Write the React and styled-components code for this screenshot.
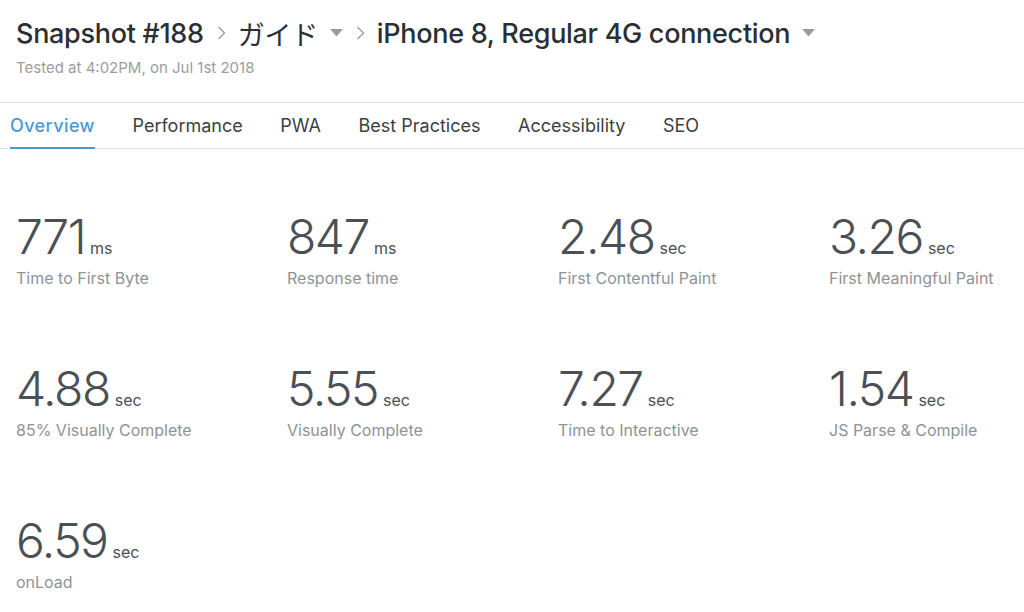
import React from "react";
import styled, { createGlobalStyle } from "styled-components";

const GlobalStyle = createGlobalStyle`
  html, body {
    margin: 0;
    padding: 0;
    background: #fff;
    font-family: Inter, "Noto Sans", "Noto Sans CJK JP", sans-serif;
    -webkit-font-smoothing: antialiased;
  }
`;

const metrics = [
  { value: "771", unit: "ms", label: "Time to First Byte" },
  { value: "847", unit: "ms", label: "Response time" },
  { value: "2.48", unit: "sec", label: "First Contentful Paint" },
  { value: "3.26", unit: "sec", label: "First Meaningful Paint" },
  { value: "4.88", unit: "sec", label: "85% Visually Complete" },
  { value: "5.55", unit: "sec", label: "Visually Complete" },
  { value: "7.27", unit: "sec", label: "Time to Interactive" },
  { value: "1.54", unit: "sec", label: "JS Parse & Compile" },
  { value: "6.59", unit: "sec", label: "onLoad" },
];

const tabs = ["Overview", "Performance", "PWA", "Best Practices", "Accessibility", "SEO"];

const Page = styled.div`
  width: 1024px;
  min-height: 612px;
  overflow: hidden;
`;

const Header = styled.header`
  padding: 13px 16px 0;
  height: 102px;
  box-sizing: border-box;
`;

const Crumbs = styled.h1`
  display: flex;
  align-items: center;
  margin: 0;
  height: 40px;
  font-size: 27px;
  font-weight: 500;
  color: #2b2f33;
  letter-spacing: -0.3px;
`;

const Crumb = styled.span`
  font-weight: ${(p) => (p.$light ? 400 : 500)};
  font-family: ${(p) =>
    p.$light ? '"Noto Sans CJK JP", Inter, sans-serif' : 'Inter, "Noto Sans CJK JP", sans-serif'};
`;

const Sep = styled.span`
  display: inline-flex;
  margin: 0 12px 0 13px;
  color: #9a9a9a;
`;

const Caret = styled.span`
  display: inline-flex;
  margin-left: 12px;
  color: #9b9b9b;
`;

const Sub = styled.div`
  margin-top: 5px;
  font-size: 15px;
  color: #9a9da0;
`;

const Tabs = styled.nav`
  display: flex;
  gap: 37.6px;
  height: 45px;
  padding: 0 10px;
  border-top: 1px solid #dedede;
  border-bottom: 1px solid #dedede;
`;

const Tab = styled.div`
  display: flex;
  align-items: center;
  font-size: 18px;
  color: ${(p) => (p.$active ? "#4a9ad6" : "#3b3f43")};
  font-weight: ${(p) => (p.$active ? 500 : 400)};
  letter-spacing: ${(p) => (p.$active ? "0.4px" : "0")};
  border-bottom: 2px solid ${(p) => (p.$active ? "#4a9ad6" : "transparent")};
  margin-bottom: -1px;
  padding-top: 1px;
`;

const Grid = styled.section`
  display: grid;
  grid-template-columns: repeat(3, 271px) 1fr;
  row-gap: 73px;
  padding: 60px 16px 0;
`;

const Metric = styled.div`
  display: flex;
  flex-direction: column;
`;

const ValueRow = styled.div`
  display: flex;
  align-items: baseline;
  gap: 5px;
  color: #4b5055;
`;

const Value = styled.span`
  font-size: 48px;
  font-weight: 300;
  line-height: 56px;
  letter-spacing: -1.5px;
`;

const Unit = styled.span`
  font-size: 16px;
  font-weight: 400;
`;

const Label = styled.div`
  margin-top: 3px;
  font-size: 16px;
  color: #8e9396;
`;

const Chevron = () => (
  <svg width="9" height="16" viewBox="0 0 9 16">
    <path d="M1.5 2 L7.5 8 L1.5 14" fill="none" stroke="currentColor" strokeWidth="1.3" />
  </svg>
);

const Down = () => (
  <svg width="13" height="8" viewBox="0 0 13 8">
    <path d="M0 0 H13 L6.5 7.5 Z" fill="currentColor" />
  </svg>
);

export default function App() {
  return (
    <Page>
      <GlobalStyle />
      <Header>
        <Crumbs>
          <Crumb>Snapshot #188</Crumb>
          <Sep><Chevron /></Sep>
          <Crumb $light>ガイド</Crumb>
          <Caret><Down /></Caret>
          <Sep><Chevron /></Sep>
          <Crumb>iPhone 8, Regular 4G connection</Crumb>
          <Caret><Down /></Caret>
        </Crumbs>
        <Sub>Tested at 4:02PM, on Jul 1st 2018</Sub>
      </Header>
      <Tabs>
        {tabs.map((t, i) => (
          <Tab key={t} $active={i === 0}>{t}</Tab>
        ))}
      </Tabs>
      <Grid>
        {metrics.map((m) => (
          <Metric key={m.label}>
            <ValueRow>
              <Value>{m.value}</Value>
              <Unit>{m.unit}</Unit>
            </ValueRow>
            <Label>{m.label}</Label>
          </Metric>
        ))}
      </Grid>
    </Page>
  );
}
